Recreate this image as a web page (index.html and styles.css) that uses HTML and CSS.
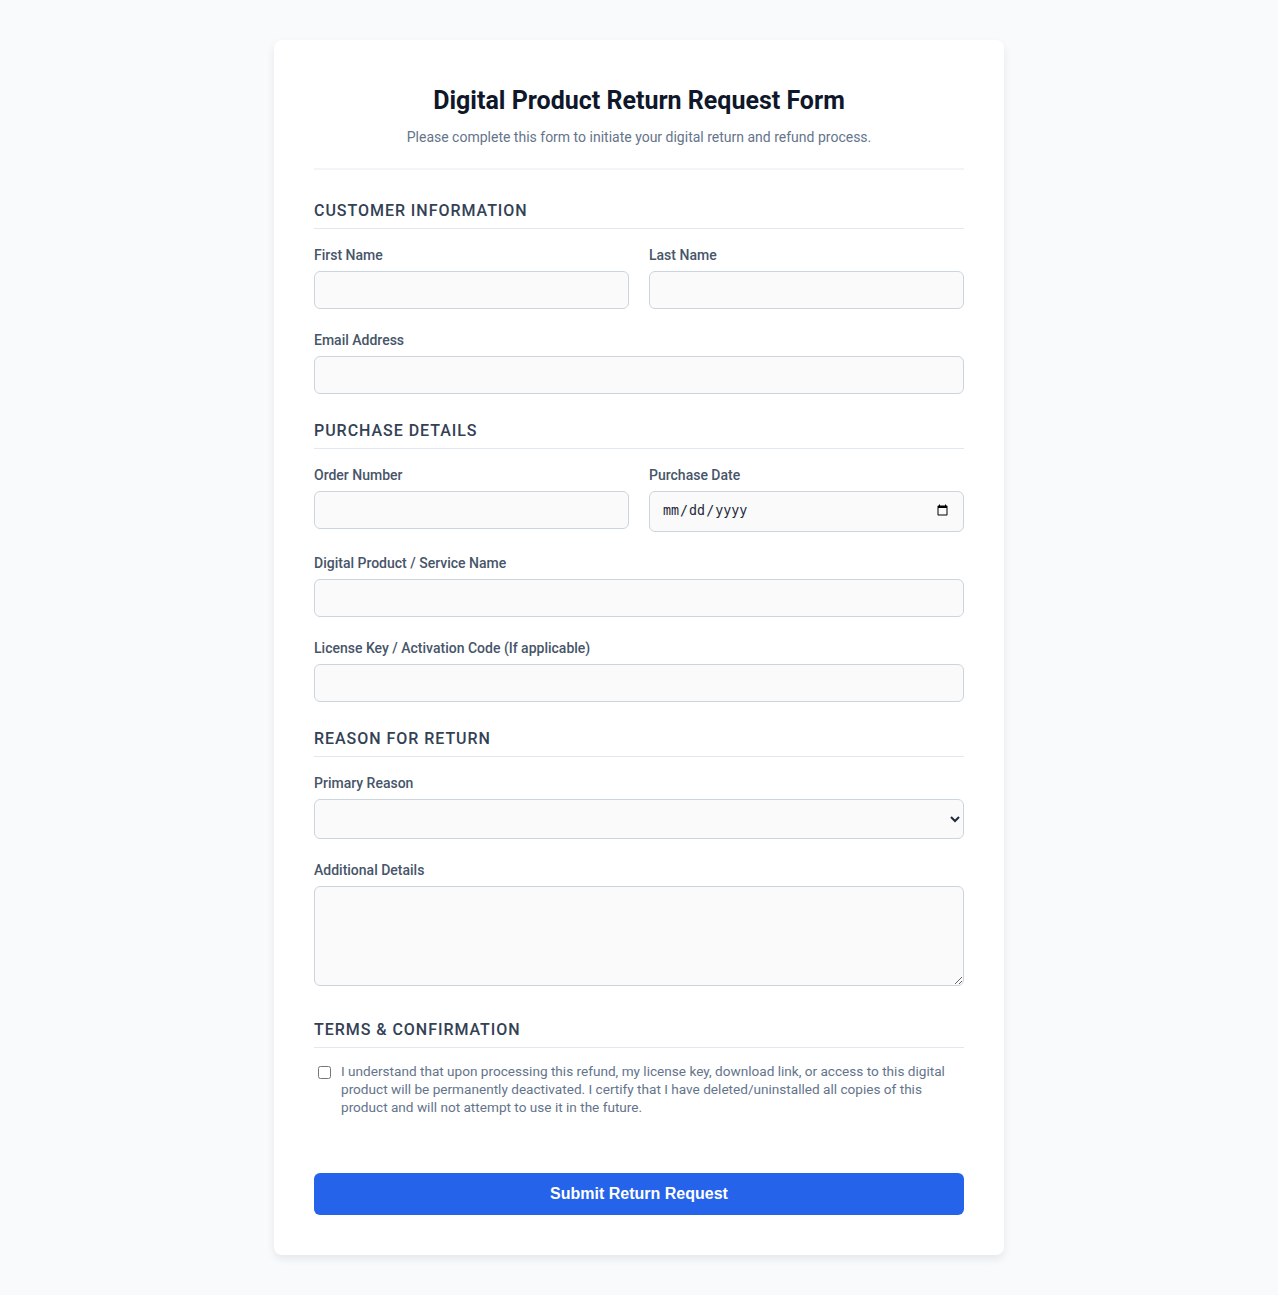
FILE: index.html
```html
<!DOCTYPE html>
<html lang="en">
<head>
    <meta charset="UTF-8">
    <title>Digital Product Return Request Form</title>
    <link rel="stylesheet" href="styles.css">
</head>
<body>
    <div class="form-card">
        <div class="form-header">
            <h1>Digital Product Return Request Form</h1>
            <p>Please complete this form to initiate your digital return and refund process.</p>
        </div>

        <form>
            <div class="form-section">
                <h2 class="section-title">Customer Information</h2>
                <div class="form-row">
                    <div class="form-group">
                        <label for="firstName">First Name</label>
                        <input type="text" id="firstName">
                    </div>
                    <div class="form-group">
                        <label for="lastName">Last Name</label>
                        <input type="text" id="lastName">
                    </div>
                </div>
                <div class="form-group">
                    <label for="email">Email Address</label>
                    <input type="email" id="email">
                </div>
            </div>

            <div class="form-section">
                <h2 class="section-title">Purchase Details</h2>
                <div class="form-row">
                    <div class="form-group">
                        <label for="orderNumber">Order Number</label>
                        <input type="text" id="orderNumber">
                    </div>
                    <div class="form-group">
                        <label for="purchaseDate">Purchase Date</label>
                        <input type="date" id="purchaseDate">
                    </div>
                </div>
                <div class="form-group">
                    <label for="productName">Digital Product / Service Name</label>
                    <input type="text" id="productName">
                </div>
                <div class="form-group">
                    <label for="licenseKey">License Key / Activation Code (If applicable)</label>
                    <input type="text" id="licenseKey">
                </div>
            </div>

            <div class="form-section">
                <h2 class="section-title">Reason for Return</h2>
                <div class="form-group">
                    <label for="reason">Primary Reason</label>
                    <select id="reason">
                        <option value=""></option>
                        <option value="not-working">Product not working as described</option>
                        <option value="duplicate">Duplicate purchase</option>
                        <option value="compatibility">Compatibility issues</option>
                        <option value="other">Other</option>
                    </select>
                </div>
                <div class="form-group">
                    <label for="details">Additional Details</label>
                    <textarea id="details"></textarea>
                </div>
            </div>

            <div class="form-section terms">
                <h2 class="section-title">Terms &amp; Confirmation</h2>
                <div class="checkbox-group">
                    <input type="checkbox" id="confirm">
                    <label for="confirm">I understand that upon processing this refund, my license key, download link, or access to this digital product will be permanently deactivated. I certify that I have deleted/uninstalled all copies of this product and will not attempt to use it in the future.</label>
                </div>
            </div>

            <div class="form-actions">
                <button type="submit" class="submit-btn">Submit Return Request</button>
            </div>
        </form>
    </div>
</body>
</html>
```

FILE: styles.css
```css
* {
    box-sizing: border-box;
}

body {
    margin: 0;
    padding: 40px 20px;
    font-family: "Segoe UI", Roboto, sans-serif;
    line-height: 1.5;
    background-color: #f8fafc;
    color: #1e293b;
}

.form-card {
    max-width: 730px;
    margin: 0 auto;
    padding: 40px;
    background-color: #fff;
    border-radius: 8px;
    box-shadow: 0 4px 8px rgba(15, 23, 42, 0.08);
}

.form-header {
    text-align: center;
    padding-bottom: 20px;
    border-bottom: 2px solid #f1f5f9;
    margin-bottom: 29px;
}

.form-header h1 {
    font-size: 25px;
    margin: 2px 0 7px;
    color: #0f172a;
}

.form-header p {
    font-size: 14px;
    margin: 0;
    color: #64748b;
}

.form-section {
    margin-bottom: 25px;
}

.section-title {
    font-size: 16px;
    font-weight: 500;
    text-transform: uppercase;
    letter-spacing: 0.06em;
    color: #334155;
    margin: 0 0 16px;
    padding-bottom: 5px;
    border-bottom: 1px solid #e2e8f0;
}

.terms .section-title {
    margin-bottom: 14px;
}

.form-row {
    display: grid;
    grid-template-columns: 1fr 1fr;
    gap: 20px;
    margin-bottom: 21px;
}

.form-row .form-group {
    margin-bottom: 0;
}

.form-group {
    margin-bottom: 21px;
}

.form-section > .form-group:last-child {
    margin-bottom: 0;
}

.form-group label {
    display: block;
    font-size: 14px;
    font-weight: 500;
    color: #475569;
    margin-bottom: 5px;
}

.form-group input,
.form-group select,
.form-group textarea {
    width: 100%;
    padding: 10px 12px;
    line-height: 16px;
    border: 1px solid #cbd5e1;
    border-radius: 6px;
    background-color: #fafafa;
    color: #1e293b;
}

.form-group input[type="date"] {
    padding: 10px 12px 11px;
}

.form-group select {
    padding: 10px 8px 11px;
}

.form-group textarea {
    height: 100px;
    resize: vertical;
}

.checkbox-group {
    display: flex;
    align-items: flex-start;
    gap: 7px;
}

.checkbox-group input {
    margin: 4px 3px 0 4px;
    flex-shrink: 0;
}

.checkbox-group label {
    font-size: 13.6px;
    line-height: 18px;
    color: #64748b;
}

.form-actions {
    padding-top: 32px;
}

.submit-btn {
    display: block;
    width: 100%;
    padding: 12px;
    border: none;
    border-radius: 6px;
    background-color: #2563eb;
    color: #fff;
    font-size: 16px;
    font-weight: bold;
    cursor: pointer;
}

.submit-btn:hover {
    background-color: #1d4ed8;
}
```
